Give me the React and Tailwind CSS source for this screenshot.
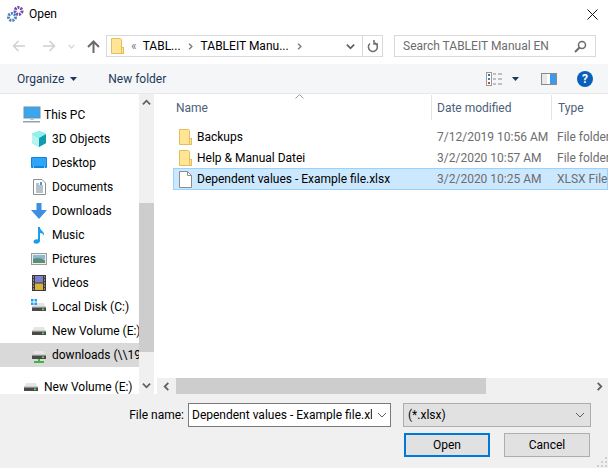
import React from "react";

const font = { fontFamily: 'Roboto, "Noto Sans", sans-serif' };

function Folder({ className = "" }) {
  return (
    <svg width="13" height="16" viewBox="0 0 13 16" className={className}>
      <path d="M0.500 0.500H9.500L10.500 1.500V15.500H0.500Z" fill="#ffe594" stroke="#e3be5c" />
      <rect x="10.500" y="9.500" width="2" height="6" fill="#ffe594" stroke="#e3be5c" />
    </svg>
  );
}

function Drive({ net }) {
  return (
    <svg width="16" height="16" viewBox="0 0 16 16">
      <path d="M2 7L3 4H13L14 7Z" fill="#e6e6e6" />
      <rect x="1" y="7" width="14" height="5" fill="#4a4a4a" />
      <rect x="1" y="7" width="14" height="1.5" fill="#cfcfcf" />
      <rect x="11" y="9.5" width="2" height="1.5" fill="#5fe05f" />
      {net && <path d="M7 12H9V14H13V16H3V14H7Z" fill="#3fb53f" />}
    </svg>
  );
}

function Chevron({ dir = "down", color = "#606060", size = 9 }) {
  const d = { down: "M1 3L5 7L9 3", up: "M1 7L5 3L9 7", left: "M7 1L3 5L7 9", right: "M3 1L7 5L3 9" }[dir];
  return (
    <svg width={size} height={size} viewBox="0 0 10 10">
      <path d={d} fill="none" stroke={color} strokeWidth="2" />
    </svg>
  );
}

const icons = {
  pc: (
    <svg width="18" height="18" viewBox="0 0 18 18">
      <rect x="1" y="1" width="16" height="11" fill="#3aa6ee" stroke="#6f8fa8" />
      <path d="M7 12H11V14H7Z" fill="#b9c7d2" />
      <rect x="0" y="15" width="17" height="1.5" fill="#8fa3b3" />
    </svg>
  ),
  cube: (
    <svg width="16" height="16" viewBox="0 0 16 16">
      <path d="M8 0L15 3V12L8 16L1 12V3Z" fill="#33c9d4" />
      <path d="M8 7L15 3V12L8 16Z" fill="#0f9dae" />
      <path d="M8 0L15 3L8 7L1 3Z" fill="#8ff0ee" />
      <path d="M1 3L8 7V16L1 12Z" fill="#b9f3ee" />
    </svg>
  ),
  desktop: (
    <svg width="16" height="14" viewBox="0 0 16 14">
      <rect x="0" y="1" width="16" height="11" rx="1" fill="#0a86e6" />
      <rect x="1" y="2" width="14" height="8" fill="#2fa5f8" />
      <rect x="2" y="10.5" width="1" height="1" fill="#fff" />
      <rect x="13" y="10.5" width="1" height="1" fill="#fff" />
    </svg>
  ),
  docs: (
    <svg width="13" height="16" viewBox="0 0 13 16">
      <path d="M0.5 0.5H9L12.5 4V15.5H0.5Z" fill="#fff" stroke="#8c8c8c" />
      <path d="M3 5H6M3 7H10M3 9H10M3 11H10M3 13H10" stroke="#6f8296" />
      <path d="M7 3H9V6H7Z" fill="#3f9ae0" />
    </svg>
  ),
  down: (
    <svg width="16" height="16" viewBox="0 0 16 16">
      <path d="M5.5 0H10.5V7H16L8 16L0 7H5.5Z" fill="#3d8fe0" />
    </svg>
  ),
  music: (
    <svg width="14" height="17" viewBox="0 0 14 17">
      <path d="M6 0H8C8 4 13 4 12 9C11 6 9 6 8 6V14C8 16 5 17 3 16.500C0 15.500 2 11.500 6 12.500Z" fill="#1b9cf0" />
    </svg>
  ),
  pictures: (
    <svg width="16" height="12" viewBox="0 0 16 12">
      <rect x="0.500" y="0.500" width="15" height="11" fill="#e9eff3" stroke="#9b9b9b" />
      <path d="M2 2H14V6H2Z" fill="#8fb6d8" />
      <path d="M2 6C6 4 10 5 14 7V10H2Z" fill="#5b8f6f" />
    </svg>
  ),
  videos: (
    <svg width="14" height="16" viewBox="0 0 14 16">
      <rect width="14" height="16" fill="#3a3a3a" />
      <rect x="3" y="1" width="8" height="6.500" fill="#7a7fd0" />
      <rect x="3" y="8.500" width="8" height="6.500" fill="#d8b23a" />
      <path d="M1 2H2M1 5H2M1 8H2M1 11H2M1 14H2M12 2H13M12 5H13M12 8H13M12 11H13M12 14H13" stroke="#ddd" />
    </svg>
  ),
  local: (
    <div className="relative w-4 h-4">
      <Drive />
      <svg width="6" height="6" viewBox="0 0 6 6" className="absolute left-0 top-0">
        <path d="M0 0H2.500V2.500H0ZM3.500 0H6V2.500H3.500ZM0 3.500H2.500V6H0ZM3.500 3.500H6V6H3.500Z" fill="#1c9ff0" />
      </svg>
    </div>
  ),
  drive: <Drive />,
  net: <Drive net />,
};

function NavRow({ icon, label, indent = "pl-[31px]", gap = "w-[21px]", selected }) {
  return (
    <div className={`h-6 flex items-center whitespace-nowrap overflow-hidden ${indent} ${selected ? "bg-[#d9d9d9]" : ""}`}>
      <div className={`${gap} shrink-0 flex items-center`}>{icon}</div>
      <span>{label}</span>
    </div>
  );
}

function FileRow({ icon, name, date, type, selected }) {
  return (
    <div className={`ml-4 flex items-center whitespace-nowrap border ${selected ? "h-[22px] bg-[#cce8ff] border-[#99d1ff]" : "h-[21px] border-transparent"}`}>
      <div className="w-[23px] pl-[5px] shrink-0 flex">{icon}</div>
      <span className="w-[240px] shrink-0">{name}</span>
      <span className="w-[120px] shrink-0 text-[#6d6d6d]">{date}</span>
      <span className="text-[#6d6d6d]">{type}</span>
    </div>
  );
}

export default function App() {
  return (
    <div className="w-[608px] h-[468px] overflow-hidden bg-white flex flex-col text-[12px] text-black leading-none" style={font}>
      {/* title bar */}
      <div className="h-[28px] flex items-center pl-[7px] pr-[10px] shrink-0">
        <svg width="17" height="16" viewBox="0 0 17 16">
          <circle cx="11.500" cy="5" r="3.500" fill="none" stroke="#6d4bb0" strokeWidth="3" strokeDasharray="2 1" />
          <circle cx="5" cy="11" r="3.500" fill="none" stroke="#4a84c4" strokeWidth="3" strokeDasharray="2 1" />
        </svg>
        <span className="ml-[5px]">Open</span>
        <svg width="11" height="11" viewBox="0 0 11 11" className="ml-auto">
          <path d="M0.500 0.500L10.500 10.500M10.500 0.500L0.500 10.500" stroke="#111" />
        </svg>
      </div>

      {/* nav bar */}
      <div className="h-[36px] flex items-center shrink-0 pl-3 pr-[12px]">
        <svg width="14" height="12" viewBox="0 0 14 12"><path d="M13 6H2M6.500 1L1.500 6L6.500 11" fill="none" stroke="#d0d0d0" strokeWidth="1.500" /></svg>
        <svg width="14" height="12" viewBox="0 0 14 12" className="ml-4"><path d="M1 6H12M7.500 1L12.500 6L7.500 11" fill="none" stroke="#d0d0d0" strokeWidth="1.500" /></svg>
        <div className="ml-[12px]"><Chevron color="#d8d8d8" size={7} /></div>
        <svg width="13" height="13" viewBox="0 0 13 13" className="ml-[12px]"><path d="M6.500 13V2M1 7L6.500 1.500L12 7" fill="none" stroke="#6b6b6b" strokeWidth="2" /></svg>
        <div className="ml-[6px] w-[277px] h-[22px] border border-[#d9d9d9] flex items-center pl-[4px] whitespace-nowrap">
          <Folder />
          <span className="ml-[7px] text-[#7a7a7a]">«</span>
          <span className="ml-[6px]">TABL...</span>
          <div className="ml-[6px]"><Chevron dir="right" color="#7a7a7a" size={7} /></div>
          <span className="ml-[7px]">TABLEIT Manu...</span>
          <div className="ml-[7px]"><Chevron dir="right" color="#7a7a7a" size={7} /></div>
          <div className="ml-auto flex items-center h-full">
            <div className="mr-[7px]"><Chevron color="#606060" size={9} /></div>
            <div className="w-5 h-full border-l border-[#d9d9d9] flex items-center justify-center">
              <svg width="12" height="13" viewBox="0 0 12 13"><path d="M8 3A4.500 4.500 0 1 1 3 3.500M7 0V4H11" fill="none" stroke="#6b6b6b" strokeWidth="1.500" /></svg>
            </div>
          </div>
        </div>
        <div className="ml-auto w-[202px] h-[22px] border border-[#d9d9d9] flex items-center pl-2 pr-2 text-[#6d6d6d] whitespace-nowrap">
          <span>Search TABLEIT Manual EN</span>
          <svg width="13" height="13" viewBox="0 0 13 13" className="ml-auto"><circle cx="8" cy="5" r="3.500" fill="none" stroke="#6b6b6b" strokeWidth="1.500" /><path d="M5.500 7.500L1 12" stroke="#6b6b6b" strokeWidth="2" /></svg>
        </div>
      </div>

      {/* toolbar */}
      <div className="h-[30px] bg-[#f5f6f7] border-b border-[#e8e8e8] flex items-center shrink-0 pl-[17px] pr-[15px] text-[#1e395b] box-border">
        <span>Organize</span>
        <svg width="7" height="4" viewBox="0 0 7 4" className="ml-[6px]"><path d="M0 0H7L3.500 4Z" fill="#1e395b" /></svg>
        <span className="ml-[31px]">New folder</span>
        <svg width="16" height="14" viewBox="0 0 16 14" className="ml-auto">
          <rect x="0.500" y="0.500" width="5" height="13" fill="#fff" stroke="#9a9a9a" />
          <rect x="2" y="2" width="2" height="2" fill="#666" />
          <rect x="2" y="6" width="2" height="2" fill="#2f7fd0" />
          <rect x="2" y="10" width="2" height="2" fill="#d04040" />
          <path d="M7 2H10M12 2H16M7 7H10M12 7H16M7 12H10M12 12H16" stroke="#8a8a8a" />
        </svg>
        <svg width="7" height="4" viewBox="0 0 7 4" className="ml-[10px]"><path d="M0 0H7L3.500 4Z" fill="#1e395b" /></svg>
        <svg width="16" height="12" viewBox="0 0 16 12" className="ml-[22px]">
          <rect x="0.500" y="0.500" width="15" height="11" fill="#fff" stroke="#8a8a8a" />
          <rect x="1" y="1" width="5" height="10" fill="#e8e8e8" />
          <rect x="9" y="1" width="6" height="10" fill="#3c9ae8" />
        </svg>
        <div className="ml-[20px] w-4 h-4 rounded-full bg-[#0a5fb8] text-white flex items-center justify-center font-bold text-[12px]">?</div>
      </div>

      {/* main */}
      <div className="flex flex-1 min-h-0">
        {/* sidebar */}
        <div className="w-[139px] shrink-0 overflow-hidden pt-[9px] text-[12px]">
          <NavRow icon={icons.pc} label="This PC" indent="pl-[23px]" />
          <NavRow icon={icons.cube} label="3D Objects" />
          <NavRow icon={icons.desktop} label="Desktop" />
          <NavRow icon={icons.docs} label="Documents" indent="pl-[33px]" gap="w-[19px]" />
          <NavRow icon={icons.down} label="Downloads" />
          <NavRow icon={icons.music} label="Music" indent="pl-[32px]" gap="w-[20px]" />
          <NavRow icon={icons.pictures} label="Pictures" />
          <NavRow icon={icons.videos} label="Videos" indent="pl-[32px]" gap="w-[20px]" />
          <NavRow icon={icons.local} label="Local Disk (C:)" />
          <NavRow icon={icons.drive} label="New Volume (E:)" />
          <NavRow icon={icons.net} label="downloads (\\192.168.1.1)" selected />
          <div className="h-2" />
          <NavRow icon={icons.drive} label="New Volume (E:)" indent="pl-[23px]" />
        </div>
        {/* vertical scrollbar */}
        <div className="w-[15px] shrink-0 bg-[#f0f0f0] flex flex-col items-center">
          <div className="h-[17px] shrink-0 flex items-center justify-center"><Chevron dir="up" size={9} /></div>
          <div className="h-[92px] shrink-0" />
          <div className="w-full h-[149px] shrink-0 bg-[#cdcdcd]" />
          <div className="flex-1" />
          <div className="h-[17px] shrink-0 flex items-center justify-center"><Chevron size={9} /></div>
        </div>
        {/* file list */}
        <div className="flex-1 min-w-0 ml-[3px] flex flex-col overflow-hidden">
          <div className="h-[26px] shrink-0 flex items-center relative text-[#4c607a] whitespace-nowrap pt-[1px]">
            <span className="w-[274px] pl-[19px] shrink-0">Name</span>
            <svg width="9" height="5" viewBox="0 0 9 5" className="absolute left-[138px] top-[0px]"><path d="M0.500 4.500L4.500 0.500L8.500 4.500" fill="none" stroke="#9a9a9a" /></svg>
            <span className="w-[120px] pl-[5px] shrink-0 h-full flex items-center border-l border-[#e5e5e5]">Date modified</span>
            <span className="pl-[6px] h-full flex items-center border-l border-[#e5e5e5]">Type</span>
          </div>
          <div className="flex-1 pt-[6px] min-h-0">
            <FileRow icon={<Folder />} name="Backups" date="7/12/2019 10:56 AM" type="File folder" />
            <FileRow icon={<Folder />} name="Help & Manual Datei" date="3/2/2020 10:57 AM" type="File folder" />
            <FileRow
              selected
              icon={
                <svg width="13" height="17" viewBox="0 0 13 17">
                  <path d="M0.500 0.500H8.500L12.500 4.500V16.500H0.500Z" fill="#fff" stroke="#8c8c8c" />
                  <path d="M8.500 0.500V4.500H12.500" fill="none" stroke="#8c8c8c" />
                </svg>
              }
              name="Dependent values - Example file.xlsx"
              date="3/2/2020 10:25 AM"
              type="XLSX File"
            />
          </div>
          {/* horizontal scrollbar */}
          <div className="h-4 shrink-0 bg-[#f0f0f0] flex items-center">
            <div className="w-[19px] shrink-0 flex justify-center"><Chevron dir="left" size={9} /></div>
            <div className="w-[310px] h-full bg-[#cdcdcd] shrink-0" />
            <div className="ml-auto w-[17px] flex justify-center"><Chevron dir="right" size={9} /></div>
          </div>
        </div>
      </div>

      {/* footer */}
      <div className="h-[74px] shrink-0 bg-[#f0f0f0] relative flex flex-col items-end pr-[17px] pt-[9px]">
        <div className="flex items-center whitespace-nowrap">
          <span className="mr-[4px]">File name:</span>
          <div className="w-[203px] h-[24px] bg-white border border-[#7a7a7a] flex items-center pl-[3px] pr-[3px] overflow-hidden">
            <span className="flex-1 overflow-hidden">Dependent values - Example file.xl</span>
            <div className="ml-[5px]"><svg width="10" height="6" viewBox="0 0 10 6"><path d="M1 1L5 5L9 1" fill="none" stroke="#606060" /></svg></div>
          </div>
          <div className="ml-[12px] w-[188px] h-[24px] bg-[#e1e1e1] border border-[#adadad] flex items-center pl-[4px] pr-[5px]">
            <span>(*.xlsx)</span>
            <svg width="10" height="6" viewBox="0 0 10 6" className="ml-auto"><path d="M1 1L5 5L9 1" fill="none" stroke="#606060" /></svg>
          </div>
        </div>
        <div className="flex mt-[6px] mr-px">
          <div className="w-[86px] h-[24px] bg-[#e1e1e1] border-2 border-[#0078d7] flex items-center justify-center">Open</div>
          <div className="ml-[14px] w-[86px] h-[24px] bg-[#e1e1e1] border border-[#adadad] flex items-center justify-center">Cancel</div>
        </div>
        <svg width="10" height="10" viewBox="0 0 10 10" className="absolute right-[1px] bottom-[1px]">
          <path d="M8 0H10V2H8ZM4 4H6V6H4ZM8 4H10V6H8ZM0 8H2V10H0ZM4 8H6V10H4ZM8 8H10V10H8Z" fill="#d0d0d0" />
        </svg>
      </div>
    </div>
  );
}
